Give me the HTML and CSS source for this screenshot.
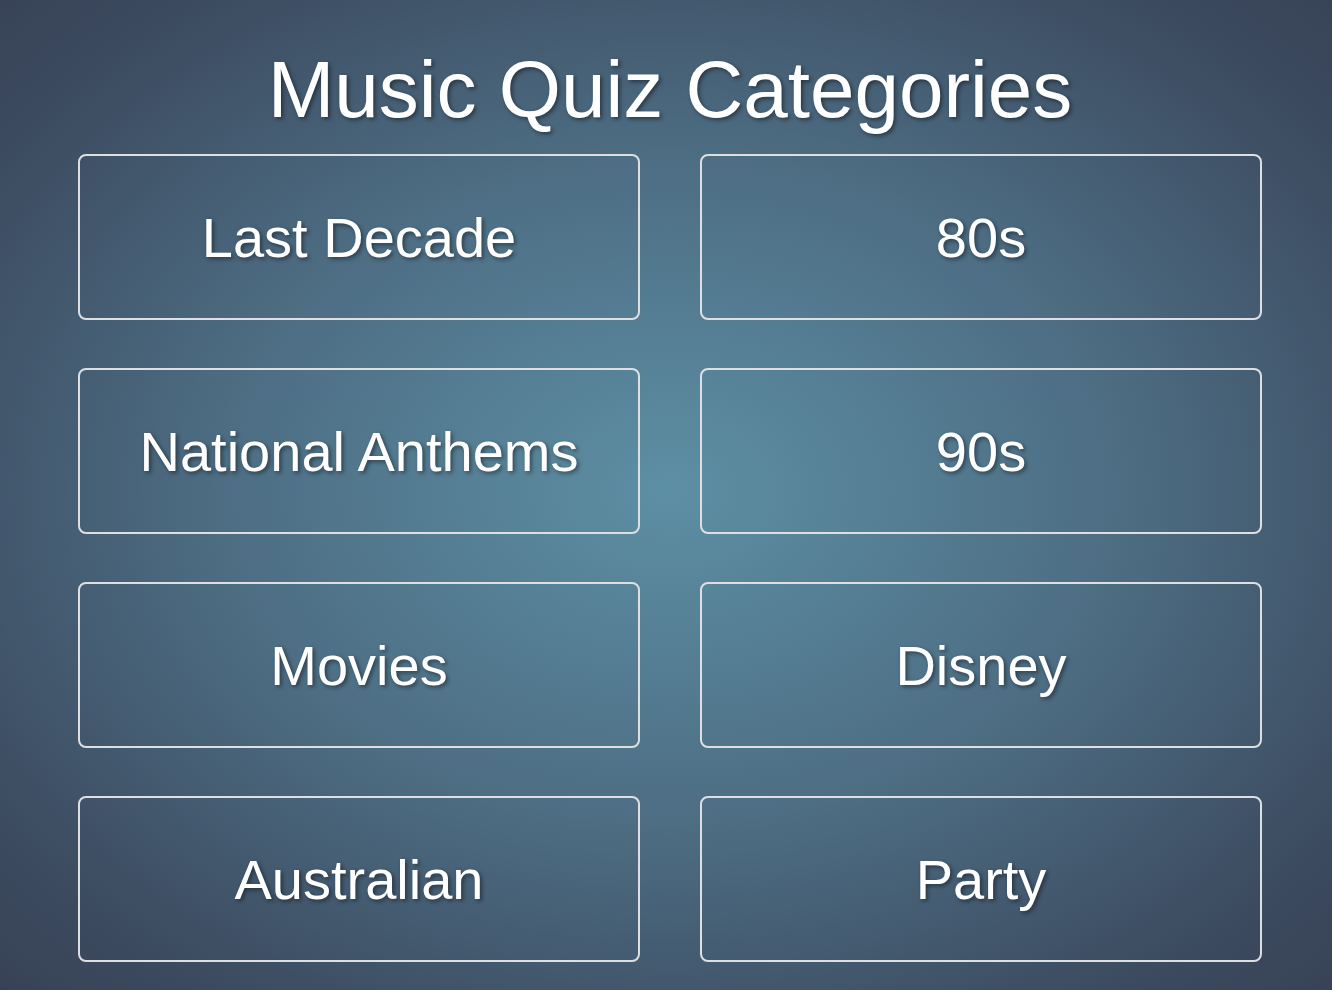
FILE: index.html
```html
<!DOCTYPE html>
<html lang="en">
<head>
<meta charset="utf-8">
<title>Music Quiz Categories</title>
<link rel="stylesheet" href="styles.css">
</head>
<body>
<main class="page">
  <h1 class="title">Music Quiz Categories</h1>
  <div class="grid">
    <div class="card">Last Decade</div>
    <div class="card">80s</div>
    <div class="card">National Anthems</div>
    <div class="card">90s</div>
    <div class="card">Movies</div>
    <div class="card">Disney</div>
    <div class="card">Australian</div>
    <div class="card">Party</div>
  </div>
</main>
</body>
</html>
```
FILE: styles.css
```css
html, body {
  margin: 0;
  padding: 0;
  height: 100%;
}
body {
  background: radial-gradient(ellipse 75% 75% at 670px 490px, #5d8fa4 0%, #4d6d83 45%, #3c4b60 80%, #363f53 100%);
  font-family: "Liberation Sans", Arial, sans-serif;
  color: #ffffff;
  overflow: hidden;
}
.page {
  padding: 50px 70px 0 78px;
}
.title {
  margin: 0;
  font-size: 80px;
  line-height: 80px;
  font-weight: normal;
  text-align: center;
  width: 1184px;
  text-shadow: 2px 2px 4px rgba(0, 0, 0, 0.45);
}
.grid {
  margin-top: 24px;
  width: 1184px;
  display: grid;
  grid-template-columns: 562px 562px;
  grid-auto-rows: 166px;
  column-gap: 60px;
  row-gap: 48px;
}
.card {
  box-sizing: border-box;
  border: 2px solid #dedfe2;
  border-radius: 8px;
  display: flex;
  align-items: center;
  justify-content: center;
  font-size: 56px;
  text-shadow: 2px 2px 4px rgba(0, 0, 0, 0.45);
}
```
